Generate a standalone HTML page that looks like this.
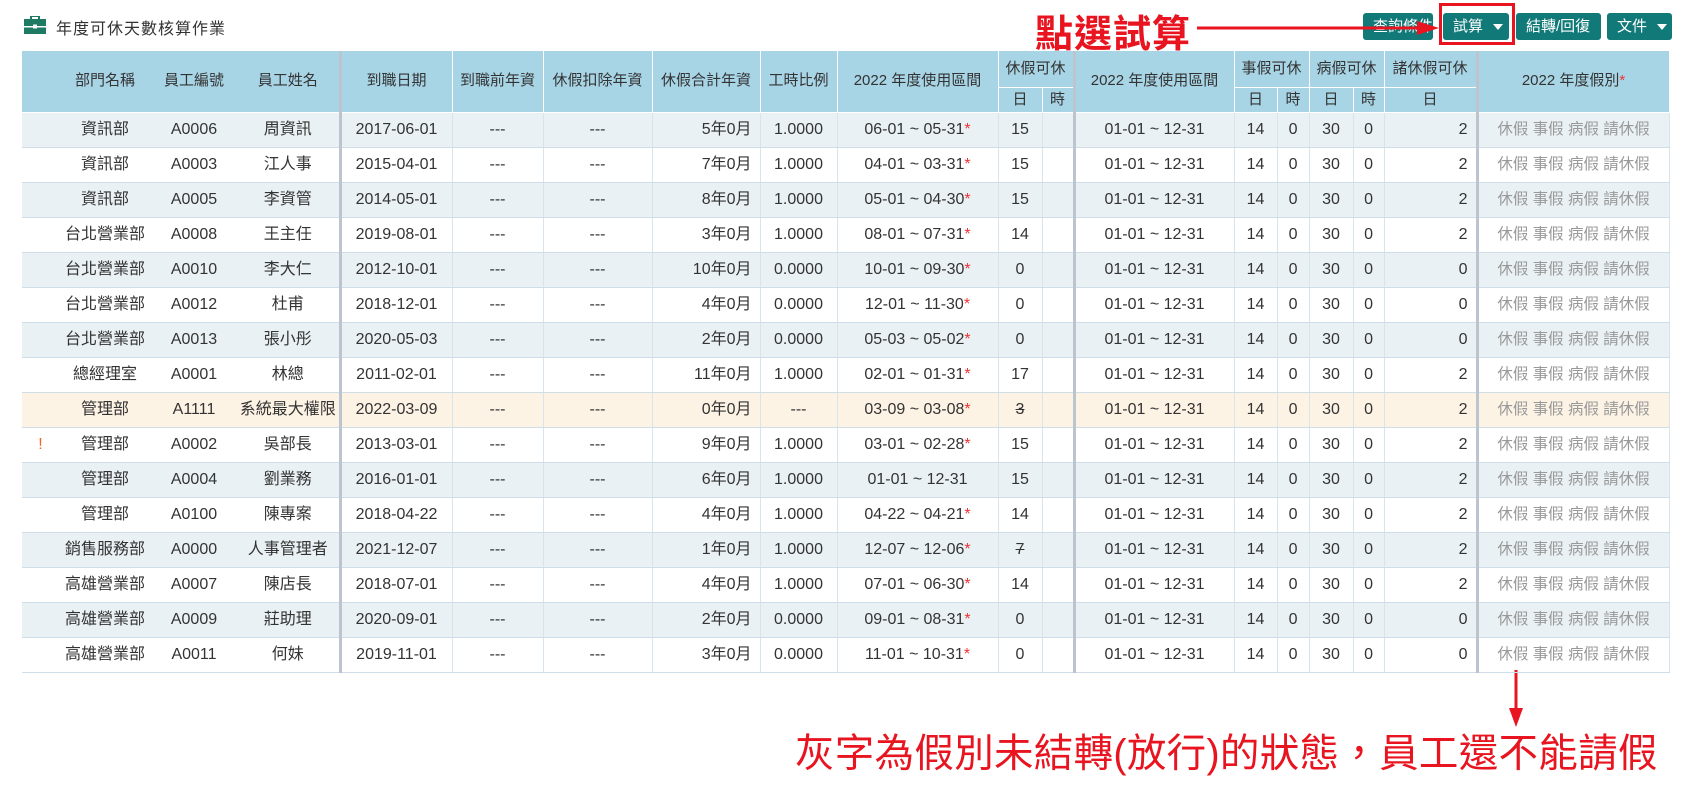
<!DOCTYPE html>
<html><head><meta charset="utf-8"><style>
*{margin:0;padding:0;box-sizing:border-box}
body{width:1690px;height:800px;background:#fff;font-family:"Liberation Sans","Noto Sans CJK TC",sans-serif;color:#333;position:relative;overflow:hidden}
.title{position:absolute;left:56px;top:15px;font-size:16px;color:#333;letter-spacing:1px}
.icon{position:absolute;left:24px;top:16px;width:22px;height:18px}
.btn{position:absolute;top:13px;height:27px;background:#117a79;color:#fff;font-size:15px;line-height:27px;border-radius:3px;padding-left:10px}
.car{display:inline-block;width:0;height:0;border-left:5px solid transparent;border-right:5px solid transparent;border-top:6px solid #fff;vertical-align:middle;margin-left:10px}
table{position:absolute;left:22px;top:51px;border-collapse:collapse;table-layout:fixed;width:1647px;font-size:16px}
th{background:#a8d5e6;font-weight:normal;font-size:15px;color:#333;border:1px solid #fff;border-top:none;white-space:nowrap;overflow:hidden;line-height:20px}
th.n{border-left:none;border-right:none}
tr.h1 th{height:36px}tr.h2 th{height:25px}
td{height:35px;line-height:20px;border-bottom:1px solid #cfdde8;border-right:1px solid #d8e4ec;text-align:center;white-space:nowrap;overflow:hidden;vertical-align:middle}
td span,th span{vertical-align:top}
td.n{border-right:none}
.tk{border-left:3px solid #bcc5cd!important}
.r{text-align:right;padding-right:8px}
tr.s td{background:#eaf1f5}
tr.y td{background:#fdf3e5}
.st{color:#e33}
.g{color:#999;font-size:15.5px}
.del{text-decoration:line-through}
.ex{color:#f26522}
.red{position:absolute;color:#e8141f;font-family:"Liberation Sans","Noto Sans CJK TC",sans-serif;white-space:nowrap}
</style></head><body>
<svg class="icon" viewBox="0 0 22 18"><rect x="7" y="0" width="8" height="4" fill="none" stroke="#1f7a64" stroke-width="2"/><rect x="0" y="3" width="22" height="15" fill="#1f7a64"/><rect x="0" y="10" width="22" height="1.5" fill="#fff"/><rect x="9" y="8.5" width="4" height="4" fill="#fff"/></svg>
<div class="title">年度可休天數核算作業</div>

<div class="btn" style="left:1363px;width:70px">查詢條件</div>
<div class="btn" style="left:1443px;width:66px">試算<span class="car"></span></div>
<div class="btn" style="left:1516px;width:85px">結轉/回復</div>
<div class="btn" style="left:1607px;width:65px">文件<span class="car"></span></div>
<div style="position:absolute;left:1439px;top:3px;width:76px;height:42px;border:3px solid #e8141f"></div>
<div class="red" style="left:1035px;top:3px;font-size:38px;font-weight:bold;letter-spacing:1px">點選試算</div>
<svg style="position:absolute;left:1195px;top:20px" width="250" height="16"><line x1="2" y1="8" x2="225" y2="8" stroke="#e8141f" stroke-width="3"/><polygon points="222,1 244,8 222,15" fill="#e8141f"/></svg>
<svg style="position:absolute;left:1508px;top:670px" width="16" height="58"><line x1="8" y1="0" x2="8" y2="40" stroke="#e8141f" stroke-width="3"/><polygon points="1,38 15,38 8,57" fill="#e8141f"/></svg>
<div class="red" style="left:795px;top:722px;font-size:39.5px;letter-spacing:0.3px">灰字為假別未結轉(放行)的狀態，員工還不能請假</div>

<table>
<colgroup><col style="width:37px"><col style="width:92px"><col style="width:86px"><col style="width:103px"><col style="width:112px"><col style="width:91px"><col style="width:109px"><col style="width:108px"><col style="width:77px"><col style="width:161px"><col style="width:44px"><col style="width:32px"><col style="width:160px"><col style="width:43px"><col style="width:32px"><col style="width:44px"><col style="width:31px"><col style="width:93px"><col style="width:192px"></colgroup>
<tr class="h1"><th class="n" rowspan="2"></th><th class="n" rowspan="2">部門名稱</th><th class="n" rowspan="2">員工編號</th><th class="n" rowspan="2">員工姓名</th><th class="tk" rowspan="2">到職日期</th><th rowspan="2">到職前年資</th><th rowspan="2">休假扣除年資</th><th rowspan="2">休假合計年資</th><th rowspan="2">工時比例</th><th rowspan="2">2022 年度使用區間</th><th colspan="2">休假可休</th><th class="tk" rowspan="2">2022 年度使用區間</th><th colspan="2">事假可休</th><th colspan="2">病假可休</th><th>諸休假可休</th><th class="tk" rowspan="2">2022 年度假別<span class="st">*</span></th></tr>
<tr class="h2"><th>日</th><th>時</th><th>日</th><th>時</th><th>日</th><th>時</th><th>日</th></tr>

<tr class="s"><td class="n"></td><td class="n">資訊部</td><td class="n">A0006</td><td class="n">周資訊</td><td class="tk">2017-06-01</td><td>---</td><td>---</td><td class="r">5年0月</td><td>1.0000</td><td>06-01 ~ 05-31<span class="st">*</span></td><td>15</td><td></td><td class="tk">01-01 ~ 12-31</td><td>14</td><td>0</td><td>30</td><td>0</td><td class="r">2</td><td class="tk g">休假 事假 病假 請休假</td></tr>
<tr><td class="n"></td><td class="n">資訊部</td><td class="n">A0003</td><td class="n">江人事</td><td class="tk">2015-04-01</td><td>---</td><td>---</td><td class="r">7年0月</td><td>1.0000</td><td>04-01 ~ 03-31<span class="st">*</span></td><td>15</td><td></td><td class="tk">01-01 ~ 12-31</td><td>14</td><td>0</td><td>30</td><td>0</td><td class="r">2</td><td class="tk g">休假 事假 病假 請休假</td></tr>
<tr class="s"><td class="n"></td><td class="n">資訊部</td><td class="n">A0005</td><td class="n">李資管</td><td class="tk">2014-05-01</td><td>---</td><td>---</td><td class="r">8年0月</td><td>1.0000</td><td>05-01 ~ 04-30<span class="st">*</span></td><td>15</td><td></td><td class="tk">01-01 ~ 12-31</td><td>14</td><td>0</td><td>30</td><td>0</td><td class="r">2</td><td class="tk g">休假 事假 病假 請休假</td></tr>
<tr><td class="n"></td><td class="n">台北營業部</td><td class="n">A0008</td><td class="n">王主任</td><td class="tk">2019-08-01</td><td>---</td><td>---</td><td class="r">3年0月</td><td>1.0000</td><td>08-01 ~ 07-31<span class="st">*</span></td><td>14</td><td></td><td class="tk">01-01 ~ 12-31</td><td>14</td><td>0</td><td>30</td><td>0</td><td class="r">2</td><td class="tk g">休假 事假 病假 請休假</td></tr>
<tr class="s"><td class="n"></td><td class="n">台北營業部</td><td class="n">A0010</td><td class="n">李大仁</td><td class="tk">2012-10-01</td><td>---</td><td>---</td><td class="r">10年0月</td><td>0.0000</td><td>10-01 ~ 09-30<span class="st">*</span></td><td>0</td><td></td><td class="tk">01-01 ~ 12-31</td><td>14</td><td>0</td><td>30</td><td>0</td><td class="r">0</td><td class="tk g">休假 事假 病假 請休假</td></tr>
<tr><td class="n"></td><td class="n">台北營業部</td><td class="n">A0012</td><td class="n">杜甫</td><td class="tk">2018-12-01</td><td>---</td><td>---</td><td class="r">4年0月</td><td>0.0000</td><td>12-01 ~ 11-30<span class="st">*</span></td><td>0</td><td></td><td class="tk">01-01 ~ 12-31</td><td>14</td><td>0</td><td>30</td><td>0</td><td class="r">0</td><td class="tk g">休假 事假 病假 請休假</td></tr>
<tr class="s"><td class="n"></td><td class="n">台北營業部</td><td class="n">A0013</td><td class="n">張小彤</td><td class="tk">2020-05-03</td><td>---</td><td>---</td><td class="r">2年0月</td><td>0.0000</td><td>05-03 ~ 05-02<span class="st">*</span></td><td>0</td><td></td><td class="tk">01-01 ~ 12-31</td><td>14</td><td>0</td><td>30</td><td>0</td><td class="r">0</td><td class="tk g">休假 事假 病假 請休假</td></tr>
<tr><td class="n"></td><td class="n">總經理室</td><td class="n">A0001</td><td class="n">林總</td><td class="tk">2011-02-01</td><td>---</td><td>---</td><td class="r">11年0月</td><td>1.0000</td><td>02-01 ~ 01-31<span class="st">*</span></td><td>17</td><td></td><td class="tk">01-01 ~ 12-31</td><td>14</td><td>0</td><td>30</td><td>0</td><td class="r">2</td><td class="tk g">休假 事假 病假 請休假</td></tr>
<tr class="y"><td class="n"></td><td class="n">管理部</td><td class="n">A1111</td><td class="n">系統最大權限</td><td class="tk">2022-03-09</td><td>---</td><td>---</td><td class="r">0年0月</td><td>---</td><td>03-09 ~ 03-08<span class="st">*</span></td><td><span class="del">3</span></td><td></td><td class="tk">01-01 ~ 12-31</td><td>14</td><td>0</td><td>30</td><td>0</td><td class="r">2</td><td class="tk g">休假 事假 病假 請休假</td></tr>
<tr><td class="n ex">!</td><td class="n">管理部</td><td class="n">A0002</td><td class="n">吳部長</td><td class="tk">2013-03-01</td><td>---</td><td>---</td><td class="r">9年0月</td><td>1.0000</td><td>03-01 ~ 02-28<span class="st">*</span></td><td>15</td><td></td><td class="tk">01-01 ~ 12-31</td><td>14</td><td>0</td><td>30</td><td>0</td><td class="r">2</td><td class="tk g">休假 事假 病假 請休假</td></tr>
<tr class="s"><td class="n"></td><td class="n">管理部</td><td class="n">A0004</td><td class="n">劉業務</td><td class="tk">2016-01-01</td><td>---</td><td>---</td><td class="r">6年0月</td><td>1.0000</td><td>01-01 ~ 12-31</td><td>15</td><td></td><td class="tk">01-01 ~ 12-31</td><td>14</td><td>0</td><td>30</td><td>0</td><td class="r">2</td><td class="tk g">休假 事假 病假 請休假</td></tr>
<tr><td class="n"></td><td class="n">管理部</td><td class="n">A0100</td><td class="n">陳專案</td><td class="tk">2018-04-22</td><td>---</td><td>---</td><td class="r">4年0月</td><td>1.0000</td><td>04-22 ~ 04-21<span class="st">*</span></td><td>14</td><td></td><td class="tk">01-01 ~ 12-31</td><td>14</td><td>0</td><td>30</td><td>0</td><td class="r">2</td><td class="tk g">休假 事假 病假 請休假</td></tr>
<tr class="s"><td class="n"></td><td class="n">銷售服務部</td><td class="n">A0000</td><td class="n">人事管理者</td><td class="tk">2021-12-07</td><td>---</td><td>---</td><td class="r">1年0月</td><td>1.0000</td><td>12-07 ~ 12-06<span class="st">*</span></td><td><span class="del">7</span></td><td></td><td class="tk">01-01 ~ 12-31</td><td>14</td><td>0</td><td>30</td><td>0</td><td class="r">2</td><td class="tk g">休假 事假 病假 請休假</td></tr>
<tr><td class="n"></td><td class="n">高雄營業部</td><td class="n">A0007</td><td class="n">陳店長</td><td class="tk">2018-07-01</td><td>---</td><td>---</td><td class="r">4年0月</td><td>1.0000</td><td>07-01 ~ 06-30<span class="st">*</span></td><td>14</td><td></td><td class="tk">01-01 ~ 12-31</td><td>14</td><td>0</td><td>30</td><td>0</td><td class="r">2</td><td class="tk g">休假 事假 病假 請休假</td></tr>
<tr class="s"><td class="n"></td><td class="n">高雄營業部</td><td class="n">A0009</td><td class="n">莊助理</td><td class="tk">2020-09-01</td><td>---</td><td>---</td><td class="r">2年0月</td><td>0.0000</td><td>09-01 ~ 08-31<span class="st">*</span></td><td>0</td><td></td><td class="tk">01-01 ~ 12-31</td><td>14</td><td>0</td><td>30</td><td>0</td><td class="r">0</td><td class="tk g">休假 事假 病假 請休假</td></tr>
<tr><td class="n"></td><td class="n">高雄營業部</td><td class="n">A0011</td><td class="n">何妹</td><td class="tk">2019-11-01</td><td>---</td><td>---</td><td class="r">3年0月</td><td>0.0000</td><td>11-01 ~ 10-31<span class="st">*</span></td><td>0</td><td></td><td class="tk">01-01 ~ 12-31</td><td>14</td><td>0</td><td>30</td><td>0</td><td class="r">0</td><td class="tk g">休假 事假 病假 請休假</td></tr>
</table>
</body></html>
